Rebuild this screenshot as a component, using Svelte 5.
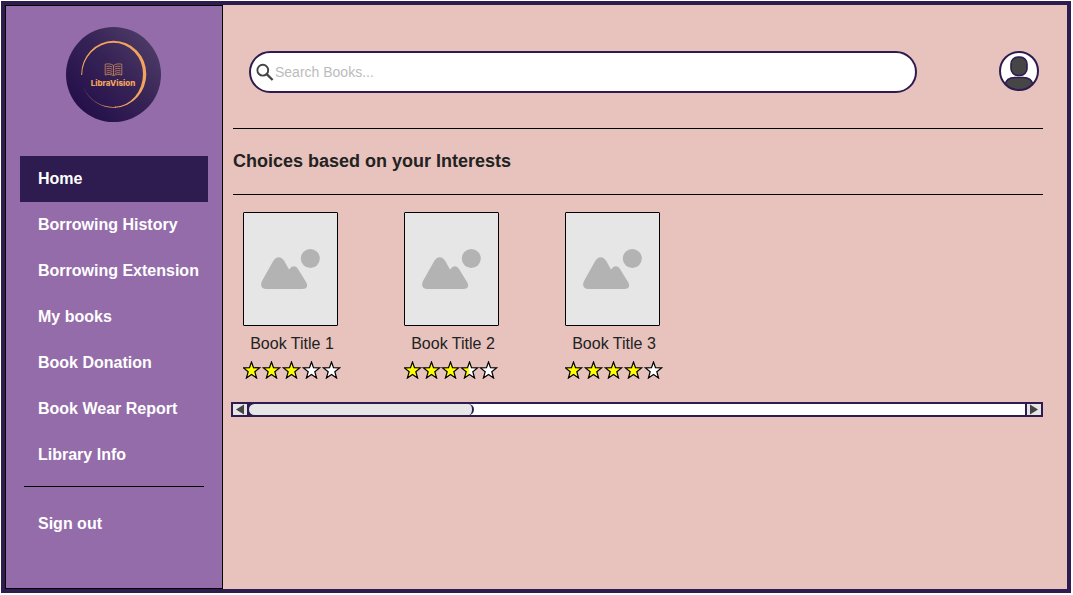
<script>
  const links = [
    'Home',
    'Borrowing History',
    'Borrowing Extension',
    'My books',
    'Book Donation',
    'Book Wear Report',
    'Library Info'
  ];
  const books = [
    { title: 'Book Title 1', rating: 3 },
    { title: 'Book Title 2', rating: 3.5 },
    { title: 'Book Title 3', rating: 4 }
  ];
  let active = $state('Home');

  function starFill(rating, n) {
    if (rating >= n) return '#ffff00';
    return rating >= n - 0.5 ? 'url(#half)' : '#ffffff';
  }
</script>

<div class="frame">
  <aside>
    <svg class="logo" viewBox="0 0 95 95" role="img" aria-label="LibraVision">
      <defs>
        <linearGradient id="disc" x1="0.15" y1="0.85" x2="0.9" y2="0.15">
          <stop offset="0" stop-color="#25104b" />
          <stop offset="0.55" stop-color="#372456" />
          <stop offset="1" stop-color="#4c3a66" />
        </linearGradient>
        <linearGradient id="ring" gradientUnits="userSpaceOnUse" x1="17" y1="62" x2="50" y2="80">
          <stop offset="0" stop-color="#f0a060" stop-opacity="0.25" />
          <stop offset="1" stop-color="#f0a060" />
        </linearGradient>
      </defs>
      <circle cx="47.5" cy="47.5" r="47.5" fill="url(#disc)" />
      <path fill="#f2a45e" d="M15.2 48 A32.4 33.6 0 0 1 47.5 13.8 A32.7 33 0 0 1 80.3 47 A33 33.6 0 0 1 49 80.8 L49 79.7 A29 32.5 0 0 0 77 47 A29.6 31 0 0 0 47.5 15.8 A31 32 0 0 0 16.2 48 Z" />
      <path fill="url(#ring)" d="M17.6 61 A33 33 0 0 0 50 80.8 L50 79.8 A32 32 0 0 1 17.9 61 Z" />
      <g fill="none" stroke="#d18b5b" stroke-width="0.8">
        <path d="M47.5 38.5 C45 36.6 42 36.6 39.2 37.2 V48 C42 47.2 45 47.2 47.5 48.6 C50 47.2 53 47.2 55.8 48 V37.2 C53 36.6 50 36.6 47.5 38.5 V48.6" />
        <path d="M40.5 39.5 q3 -1 5.8 .5 M40.5 41.7 q3 -1 5.8 .5 M40.5 43.9 q3 -1 5.8 .5 M40.5 46 q3 -1 5.8 .5 M48.7 40 q3 -1.5 5.8 -.5 M48.7 42.2 q3 -1.5 5.8 -.5 M48.7 44.4 q3 -1.5 5.8 -.5 M48.7 46.5 q3 -1.5 5.8 -.5" />
      </g>
      <text x="47" y="58.5" text-anchor="middle">LibraVision</text>
    </svg>
    <nav>
      {#each links as link}
        <a href="#top" class:active={active === link} onclick={() => (active = link)}>{link}</a>
      {/each}
      <hr />
      <a href="#top">Sign out</a>
    </nav>
  </aside>

  <main>
    <header>
      <label class="search">
        <svg viewBox="0 0 18 18" aria-hidden="true">
          <circle cx="6.8" cy="7.2" r="5.4" fill="none" stroke="#444" stroke-width="1.9" />
          <path d="M10.7 11.1 L16.6 17" fill="none" stroke="#444" stroke-width="2.3" />
        </svg>
        <input type="text" placeholder="Search Books..." aria-label="Search Books" />
      </label>
      <button class="avatar" aria-label="Profile">
        <svg viewBox="0 0 40 40">
          <defs>
            <clipPath id="round"><circle cx="20" cy="20" r="19" /></clipPath>
          </defs>
          <circle cx="20" cy="20" r="19" fill="#fff" />
          <g clip-path="url(#round)" fill="#464646" stroke="#2e1c50" stroke-width="1.6">
            <path d="M6 34 C7 28 11 26.500 16 26.500 H24 C29 26.500 33 28 34 34 V42 H6 Z" />
            <rect x="12" y="6" width="16" height="18.5" rx="7" />
          </g>
          <circle cx="20" cy="20" r="19" fill="none" stroke="#2e1c50" stroke-width="2" />
        </svg>
      </button>
    </header>

    <h1>Choices based on your Interests</h1>

    <section class="books">
      {#each books as book}
        <article>
          <svg class="cover" viewBox="0 0 95 114" aria-hidden="true">
            <rect x="0.5" y="0.5" width="94" height="113" rx="0.5" fill="#e6e6e6" stroke="#000" />
            <path fill="#b3b3b3" d="M23 77 C18.5 77 17 73 19 69 L30.5 48.5 C33.5 44 38 44 41 48.5 L46 57.5 C49 53.3 52.5 53 55 57 L63 70 C65.5 74 64 77 59.5 77 Z" />
            <circle cx="67.3" cy="46.5" r="9.5" fill="#b3b3b3" />
          </svg>
          <h2>{book.title}</h2>
          <svg class="stars" viewBox="0 0 98 18" role="img" aria-label="{book.rating} of 5 stars">
            <defs>
              <linearGradient id="half">
                <stop offset="0.5" stop-color="#ffff00" />
                <stop offset="0.5" stop-color="#ffffff" />
              </linearGradient>
            </defs>
            {#each [1, 2, 3, 4, 5] as n}
              <path
                transform="translate({(n - 1) * (book.rating === 3.5 ? 19 : 20)} 0)"
                fill={starFill(book.rating, n)}
                stroke="#000"
                stroke-width="1.2"
                d="M8.5 1 L10.5 6.7 L16.6 6.9 L11.8 10.7 L13.6 17 L8.5 13.4 L3.4 17 L5.2 10.700 L0.4 6.9 L6.5 6.7 Z"
              />
            {/each}
          </svg>
        </article>
      {/each}
    </section>

    <div class="scroller">
      <button aria-label="Scroll left">
        <svg viewBox="0 0 14 11"><path d="M11 0.500 L3 5.500 L11 10.500 Z" fill="#444" /></svg>
      </button>
      <div class="track"><div class="thumb"></div></div>
      <button aria-label="Scroll right">
        <svg viewBox="0 0 14 11"><path d="M3 0.500 L11 5.500 L3 10.500 Z" fill="#444" /></svg>
      </button>
    </div>
  </main>
</div>

<style>
  :global(body) {
    margin: 0;
    background: #fff;
  }
  :global(#app) {
    display: flow-root;
  }
  .frame,
  .frame * {
    box-sizing: border-box;
  }
  .frame {
    --ink: #2e1c50;
    display: flex;
    min-height: calc(100vh - 3px);
    margin: 1px 2px 2px 1px;
    border: 4px solid var(--ink);
    background: #e8c2bd;
    font-family: 'Liberation Sans', Arial, sans-serif;
    color: #222;
  }
  svg {
    display: block;
  }
  button {
    padding: 0;
    border: 0;
    background: none;
    cursor: pointer;
  }
  aside {
    flex: 0 0 218px;
    padding: 21px 14px;
    border: 1px solid #000;
    background: #946caa;
  }
  .logo {
    width: 95px;
    height: 95px;
    margin: 0 46px 34px;
  }
  .logo text {
    font: 800 8px Inter, sans-serif;
    fill: #f2a45e;
  }
  nav a {
    display: block;
    padding-left: 18px;
    font-size: 16px;
    font-weight: bold;
    line-height: 46px;
    white-space: nowrap;
    color: #fff;
    text-decoration: none;
  }
  nav a.active {
    background: var(--ink);
  }
  nav hr {
    height: 1px;
    margin: 8px 4px 14px;
    border: 0;
    background: #000;
  }
  main {
    flex: 1;
    min-width: 0;
    padding: 46px 24px 24px 8px;
  }
  header {
    display: flex;
    justify-content: space-between;
    gap: 82px;
    padding: 0 4px 35px 18px;
  }
  .search {
    display: flex;
    flex: 1;
    align-items: center;
    gap: 1px;
    height: 42px;
    padding: 0 16px 0 5px;
    border: 2px solid var(--ink);
    border-radius: 21px;
    background: #fff;
  }
  .search svg {
    width: 18px;
    height: 18px;
  }
  .search input {
    flex: 1;
    min-width: 0;
    padding: 0;
    border: 0;
    outline: 0;
    background: none;
    font: 14px 'Liberation Sans', Arial, sans-serif;
  }
  .search input::placeholder {
    color: #bbb;
  }
  .avatar,
  .avatar svg {
    width: 40px;
    height: 40px;
  }
  h1 {
    margin: 0 0 0 2px;
    border: solid #000;
    border-width: 1px 0;
    font-size: 18px;
    line-height: 65px;
  }
  .books {
    display: flex;
    gap: 63px;
    padding: 17px 12px 23px;
  }
  article {
    width: 98px;
  }
  .cover {
    width: 95px;
    height: 114px;
  }
  h2 {
    margin: 9px 0 8px;
    font-size: 16px;
    font-weight: normal;
    line-height: 18px;
    text-align: center;
  }
  .stars {
    width: 98px;
    height: 18px;
  }
  .scroller {
    display: flex;
    height: 15px;
    border: 2px solid var(--ink);
    background: #e6e6e6;
  }
  .scroller button,
  .scroller svg {
    width: 14px;
    height: 11px;
  }
  .track {
    flex: 1;
    border: solid var(--ink);
    border-width: 0 2px;
    background: linear-gradient(90deg, var(--ink) 8px, #fff 8px);
  }
  .thumb {
    width: 29%;
    height: 11px;
    border-right: 2px solid var(--ink);
    border-radius: 6px;
    background: #e6e6e6;
  }
</style>
